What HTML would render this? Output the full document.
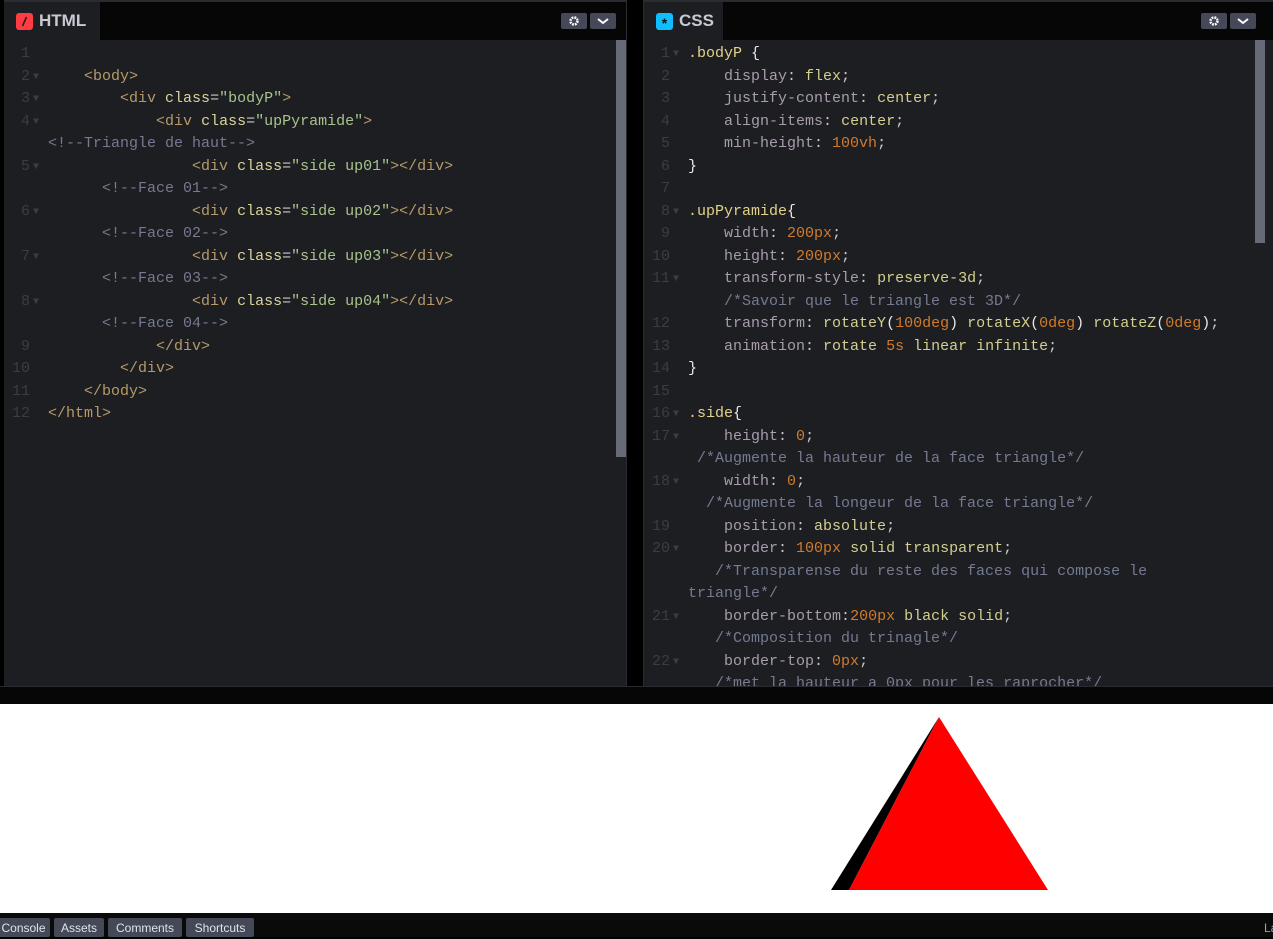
<!DOCTYPE html>
<html><head><meta charset="utf-8"><style>
*{margin:0;padding:0;box-sizing:border-box}
body{width:1273px;height:937px;background:#000;position:relative;overflow:hidden;font-family:"Liberation Sans",sans-serif}
svg{display:block}
.pane{position:absolute;top:0;height:686px;background:#1d1e22;border-top:2px solid #2b2c31;overflow:hidden}
.hdr{position:absolute;left:0;right:0;top:0;height:38px;background:#060606}
.tab{position:absolute;left:0;top:0;height:38px;background:#1d1e22;color:#c7c9d3;font-weight:bold;font-size:17px;line-height:38px;padding-left:35px}
.ico{position:absolute;left:12px;top:11px;width:17px;height:17px;border-radius:3px;overflow:hidden}
.btn{position:absolute;top:11px;height:16px;width:26px;background:#444857;border-radius:2px}
.code{position:absolute;top:41px;left:0;right:0;font-family:"Liberation Mono",monospace;font-size:15px;line-height:22.5px;color:#c8c8c8}
.r{position:relative;height:22.5px;white-space:pre}
.n{position:absolute;top:0;left:-44px;color:#3b3d45;text-align:right;width:26px}
.n i{font-style:normal;font-size:10px;position:absolute;left:29px;top:1px;color:#3b3d45}
.t{color:#b79a68}.a{color:#d9d49a}.s{color:#a9c38c}.c{color:#747a91}
.sel{color:#e2d28c}.p{color:#a79dad}.v{color:#d3cf8e}.num{color:#d07b2c}.w{color:#e8e8e8}
.sb{position:absolute;width:10px;background:#676b77}
</style></head><body>

<div class="pane" style="left:4px;width:623px;border-right:1px solid #2a2b30">
 <div class="hdr"></div>
 <div class="tab" style="width:96px"><div class="ico" style="background:#ff3c41"><svg width="17" height="17"><line x1="10.5" y1="4" x2="6.5" y2="13" stroke="#222" stroke-width="1.6"/></svg></div>HTML</div>
 <div class="btn" style="left:557px"><svg width="26" height="16"><circle cx="13" cy="8" r="3.5" fill="none" stroke="#fff" stroke-width="2.5" stroke-dasharray="1.8 1"/><circle cx="13" cy="8" r="1" fill="#444857"/></svg></div>
 <div class="btn" style="left:586px"><svg width="26" height="16"><path d="M8 6l5 4 5-4" fill="none" stroke="#fff" stroke-width="2"/></svg></div>
 <div class="sb" style="left:612px;top:38px;height:417px"></div>
 <div class="code" style="padding-left:44px">
<div class="r"><span class="n">1</span></div>
<div class="r"><span class="n">2<i>▼</i></span>    <span class="t">&lt;body&gt;</span></div>
<div class="r"><span class="n">3<i>▼</i></span>        <span class="t">&lt;div</span> <span class="a">class</span>=<span class="s">"bodyP"</span><span class="t">&gt;</span></div>
<div class="r"><span class="n">4<i>▼</i></span>            <span class="t">&lt;div</span> <span class="a">class</span>=<span class="s">"upPyramide"</span><span class="t">&gt;</span></div>
<div class="r"><span class="c">&lt;!--Triangle de haut--&gt;</span></div>
<div class="r"><span class="n">5<i>▼</i></span>                <span class="t">&lt;div</span> <span class="a">class</span>=<span class="s">"side up01"</span><span class="t">&gt;&lt;/div&gt;</span></div>
<div class="r">      <span class="c">&lt;!--Face 01--&gt;</span></div>
<div class="r"><span class="n">6<i>▼</i></span>                <span class="t">&lt;div</span> <span class="a">class</span>=<span class="s">"side up02"</span><span class="t">&gt;&lt;/div&gt;</span></div>
<div class="r">      <span class="c">&lt;!--Face 02--&gt;</span></div>
<div class="r"><span class="n">7<i>▼</i></span>                <span class="t">&lt;div</span> <span class="a">class</span>=<span class="s">"side up03"</span><span class="t">&gt;&lt;/div&gt;</span></div>
<div class="r">      <span class="c">&lt;!--Face 03--&gt;</span></div>
<div class="r"><span class="n">8<i>▼</i></span>                <span class="t">&lt;div</span> <span class="a">class</span>=<span class="s">"side up04"</span><span class="t">&gt;&lt;/div&gt;</span></div>
<div class="r">      <span class="c">&lt;!--Face 04--&gt;</span></div>
<div class="r"><span class="n">9</span>            <span class="t">&lt;/div&gt;</span></div>
<div class="r"><span class="n">10</span>        <span class="t">&lt;/div&gt;</span></div>
<div class="r"><span class="n">11</span>    <span class="t">&lt;/body&gt;</span></div>
<div class="r"><span class="n">12</span><span class="t">&lt;/html&gt;</span></div>
 </div>
</div>

<div class="pane" style="left:643px;width:630px;border-left:1px solid #2a2b30">
 <div class="hdr"></div>
 <div class="tab" style="width:79px"><div class="ico" style="background:#0ebeff"><svg width="17" height="17"><text x="8.5" y="15" text-anchor="middle" font-family="Liberation Sans" font-size="14" font-weight="bold" fill="#111">*</text></svg></div>CSS</div>
 <div class="btn" style="left:557px"><svg width="26" height="16"><circle cx="13" cy="8" r="3.5" fill="none" stroke="#fff" stroke-width="2.5" stroke-dasharray="1.8 1"/><circle cx="13" cy="8" r="1" fill="#444857"/></svg></div>
 <div class="btn" style="left:586px"><svg width="26" height="16"><path d="M8 6l5 4 5-4" fill="none" stroke="#fff" stroke-width="2"/></svg></div>
 <div class="sb" style="left:611px;top:38px;height:203px"></div>
 <div class="code" style="padding-left:44px">
<div class="r"><span class="n">1<i>▼</i></span><span class="sel">.bodyP</span> <span class="w">{</span></div>
<div class="r"><span class="n">2</span>    <span class="p">display</span>: <span class="v">flex</span>;</div>
<div class="r"><span class="n">3</span>    <span class="p">justify-content</span>: <span class="v">center</span>;</div>
<div class="r"><span class="n">4</span>    <span class="p">align-items</span>: <span class="v">center</span>;</div>
<div class="r"><span class="n">5</span>    <span class="p">min-height</span>: <span class="num">100vh</span>;</div>
<div class="r"><span class="n">6</span><span class="w">}</span></div>
<div class="r"><span class="n">7</span></div>
<div class="r"><span class="n">8<i>▼</i></span><span class="sel">.upPyramide</span><span class="w">{</span></div>
<div class="r"><span class="n">9</span>    <span class="p">width</span>: <span class="num">200px</span>;</div>
<div class="r"><span class="n">10</span>    <span class="p">height</span>: <span class="num">200px</span>;</div>
<div class="r"><span class="n">11<i>▼</i></span>    <span class="p">transform-style</span>: <span class="v">preserve-3d</span>;</div>
<div class="r">    <span class="c">/*Savoir que le triangle est 3D*/</span></div>
<div class="r"><span class="n">12</span>    <span class="p">transform</span>: <span class="v">rotateY</span><span class="w">(</span><span class="num">100deg</span><span class="w">)</span> <span class="v">rotateX</span><span class="w">(</span><span class="num">0deg</span><span class="w">)</span> <span class="v">rotateZ</span><span class="w">(</span><span class="num">0deg</span><span class="w">)</span>;</div>
<div class="r"><span class="n">13</span>    <span class="p">animation</span>: <span class="v">rotate</span> <span class="num">5s</span> <span class="v">linear</span> <span class="v">infinite</span>;</div>
<div class="r"><span class="n">14</span><span class="w">}</span></div>
<div class="r"><span class="n">15</span></div>
<div class="r"><span class="n">16<i>▼</i></span><span class="sel">.side</span><span class="w">{</span></div>
<div class="r"><span class="n">17<i>▼</i></span>    <span class="p">height</span>: <span class="num">0</span>;</div>
<div class="r"> <span class="c">/*Augmente la hauteur de la face triangle*/</span></div>
<div class="r"><span class="n">18<i>▼</i></span>    <span class="p">width</span>: <span class="num">0</span>;</div>
<div class="r">  <span class="c">/*Augmente la longeur de la face triangle*/</span></div>
<div class="r"><span class="n">19</span>    <span class="p">position</span>: <span class="v">absolute</span>;</div>
<div class="r"><span class="n">20<i>▼</i></span>    <span class="p">border</span>: <span class="num">100px</span> <span class="v">solid</span> <span class="v">transparent</span>;</div>
<div class="r">   <span class="c">/*Transparense du reste des faces qui compose le</span></div>
<div class="r"><span class="c">triangle*/</span></div>
<div class="r"><span class="n">21<i>▼</i></span>    <span class="p">border-bottom</span>:<span class="num">200px</span> <span class="v">black</span> <span class="v">solid</span>;</div>
<div class="r">   <span class="c">/*Composition du trinagle*/</span></div>
<div class="r"><span class="n">22<i>▼</i></span>    <span class="p">border-top</span>: <span class="num">0px</span>;</div>
<div class="r">   <span class="c">/*met la hauteur a 0px pour les raprocher*/</span></div>
 </div>
</div>

<div style="position:absolute;left:0;top:686px;width:1273px;height:18px;background:#060606;border-top:1px solid #2a2b30"></div>
<div style="position:absolute;left:0;top:704px;width:1273px;height:209px;background:#fff">
 <svg width="1273" height="209" style="position:absolute;left:0;top:0">
  <polygon points="939,13 831,186 849,186" fill="#000"/>
  <polygon points="939,13 849,186 1048,186" fill="#f00"/>
 </svg>
</div>
<div style="position:absolute;left:0;top:913px;width:1273px;height:24px;background:#0a0a0a;font-size:12px;color:#e2e4ea">
 <div style="position:absolute;left:-3px;top:5px;width:53px;height:19px;background:#444857;border-radius:2px;line-height:21px;text-align:center">Console</div>
 <div style="position:absolute;left:54px;top:5px;width:50px;height:19px;background:#444857;border-radius:2px;line-height:21px;text-align:center">Assets</div>
 <div style="position:absolute;left:108px;top:5px;width:74px;height:19px;background:#444857;border-radius:2px;line-height:21px;text-align:center">Comments</div>
 <div style="position:absolute;left:186px;top:5px;width:68px;height:19px;background:#444857;border-radius:2px;line-height:21px;text-align:center">Shortcuts</div>
 <div style="position:absolute;left:1264px;top:5px;line-height:21px;color:#9aa0b4">La</div>
</div>
</body></html>
